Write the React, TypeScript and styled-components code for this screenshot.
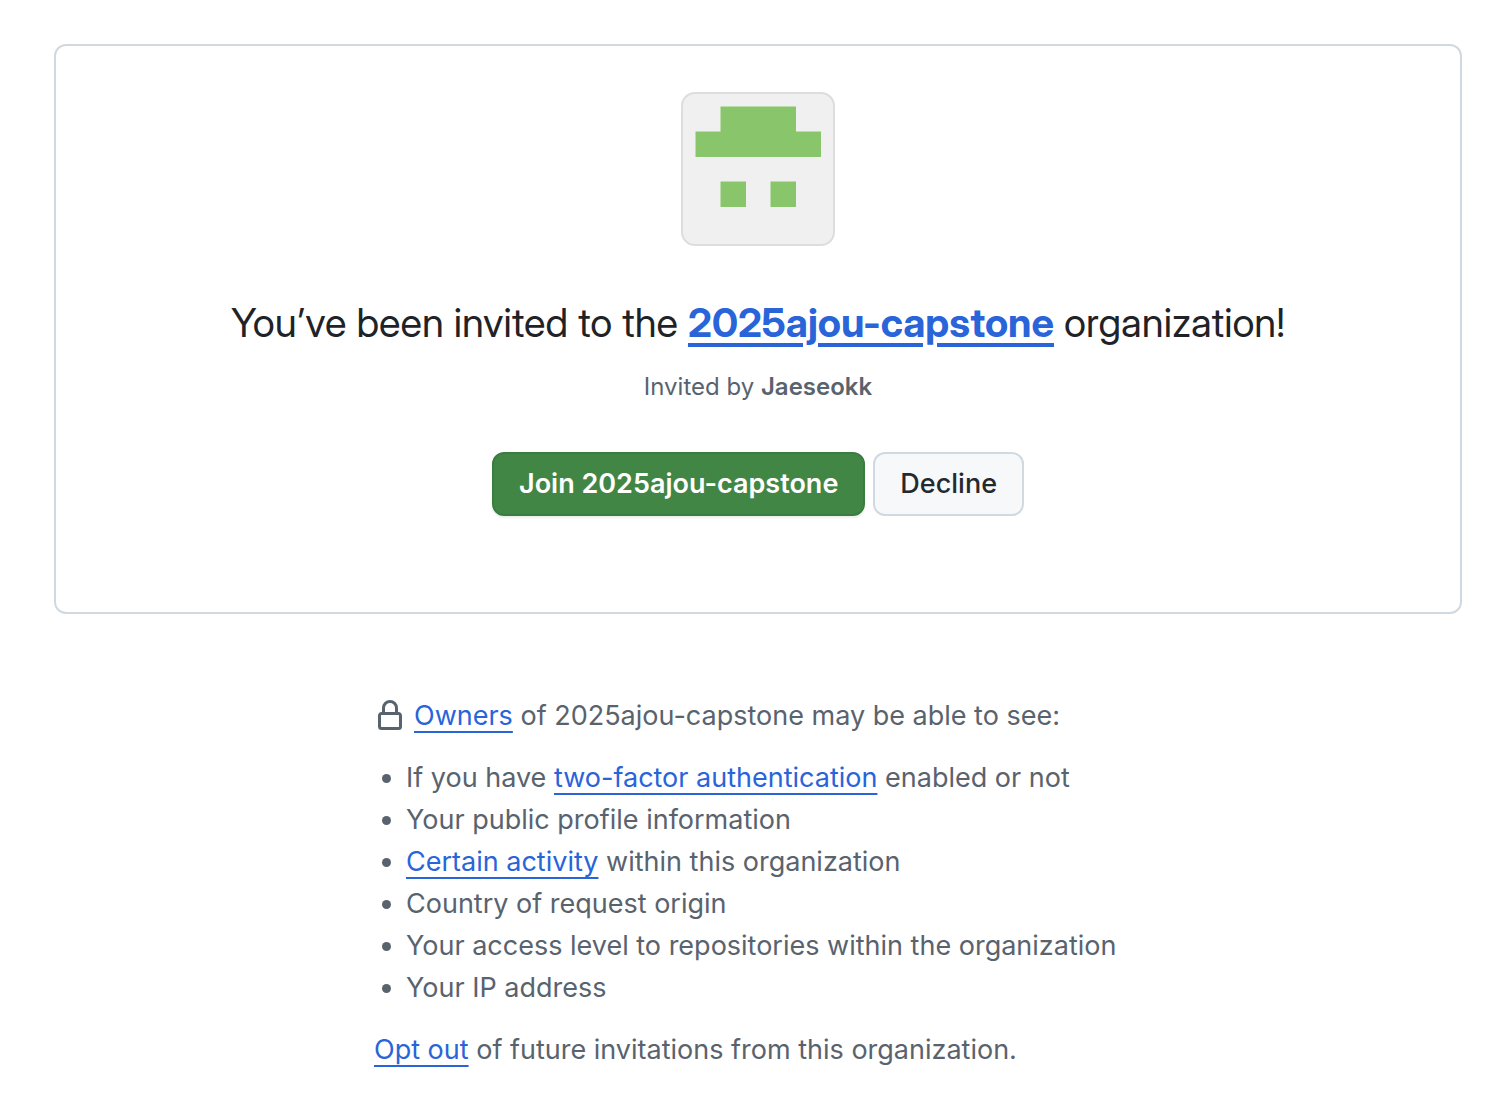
import React from 'react';
import styled, { createGlobalStyle } from 'styled-components';

const GlobalStyle = createGlobalStyle`
  *, *::before, *::after { box-sizing: border-box; }
  body {
    margin: 0;
    background: #ffffff;
    color: #1f2328;
    font-family: Inter, "Liberation Sans", sans-serif;
    font-size: 27px;
    line-height: 42px;
  }
`;

const Page = styled.main`
  padding: 44px 44px 42px 54px;
`;

const InviteCard = styled.section`
  display: flex;
  flex-direction: column;
  align-items: center;
  padding: 46px 32px 96px;
  border: 2px solid #d1d9e0;
  border-radius: 12px;
  text-align: center;
`;

const Avatar = styled.svg`
  display: block;
  width: 154px;
  height: 154px;
`;

const Title = styled.h1`
  margin: 47px 0 0;
  font-family: "Inter Display", Inter, "Liberation Sans", sans-serif;
  font-size: 40px;
  font-weight: 400;
  line-height: 60px;
`;

const TextLink = styled.a<{ $strong?: boolean }>`
  color: #2964d9;
  font-weight: ${({ $strong }) => ($strong ? 700 : 400)};
  text-decoration: underline;
  text-decoration-thickness: ${({ $strong }) => ($strong ? '4px' : '2px')};
  text-underline-offset: 6px;
`;

const InvitedBy = styled.p`
  margin: 16px 0 0;
  color: #59636e;
  font-size: 24px;
  line-height: 36px;

  b {
    font-weight: 600;
  }
`;

const Actions = styled.div`
  display: flex;
  gap: 8px;
  margin-top: 47px;
`;

const Button = styled.button<{ $primary?: boolean }>`
  height: 64px;
  padding: 0 25px;
  border: 2px solid ${({ $primary }) => ($primary ? '#3b7c40' : '#d1d9e0')};
  border-radius: 12px;
  background: ${({ $primary }) => ($primary ? '#428646' : '#f6f8fa')};
  box-shadow: ${({ $primary }) => ($primary ? '0 2px 2px rgba(31, 35, 40, 0.08)' : 'none')};
  color: ${({ $primary }) => ($primary ? '#ffffff' : '#25292e')};
  font: inherit;
  font-weight: ${({ $primary }) => ($primary ? 600 : 500)};
  cursor: pointer;
`;

const Privacy = styled.section`
  width: 100%;
  max-width: 768px;
  margin: 81px auto 0;
  color: #59636e;
`;

const PrivacyHeading = styled.p`
  display: flex;
  align-items: center;
  gap: 8px;
  margin: 0;
`;

const Lock = styled.svg`
  flex: none;
  width: 32px;
  height: 32px;
  fill: currentColor;
`;

const List = styled.ul`
  margin: 20px 0;
  padding-left: 32px;
`;

const App = () => (
  <>
    <GlobalStyle />
    <Page>
      <InviteCard>
        <Avatar viewBox="0 0 154 154" role="img" aria-label="@2025ajou-capstone">
          <rect x="1" y="1" width="152" height="152" rx="13" fill="#f0f0f0" stroke="#dcdddd" strokeWidth="2" />
          <path d="M39.5 14.5H115V39.5H140V65H14.5V39.5H39.5zM39.5 89.5H65V115H39.5zM89.5 89.5H115V115H89.5z" fill="#89c56b" />
        </Avatar>
        <Title>
          You’ve been invited to the <TextLink href="#organization" $strong>2025ajou-capstone</TextLink> organization!
        </Title>
        <InvitedBy>Invited by <b>Jaeseokk</b></InvitedBy>
        <Actions>
          <Button type="button" $primary>Join 2025ajou-capstone</Button>
          <Button type="button">Decline</Button>
        </Actions>
      </InviteCard>
      <Privacy>
        <PrivacyHeading>
          <Lock viewBox="0 0 16 16" aria-hidden="true">
            <path d="M4 4a4 4 0 0 1 8 0v2h.25c.966 0 1.75.784 1.75 1.75v5.5A1.75 1.75 0 0 1 12.25 15h-8.5A1.75 1.75 0 0 1 2 13.25v-5.5C2 6.784 2.784 6 3.75 6H4Zm8.25 3.5h-8.5a.25.25 0 0 0-.25.25v5.5c0 .138.112.25.25.25h8.5a.25.25 0 0 0 .25-.25v-5.5a.25.25 0 0 0-.25-.25ZM10.5 6V4a2.5 2.5 0 1 0-5 0v2Z" />
          </Lock>
          <span><TextLink href="#owners">Owners</TextLink> of 2025ajou-capstone may be able to see:</span>
        </PrivacyHeading>
        <List>
          <li>If you have <TextLink href="#two-factor">two-factor authentication</TextLink> enabled or not</li>
          <li>Your public profile information</li>
          <li><TextLink href="#activity">Certain activity</TextLink> within this organization</li>
          <li>Country of request origin</li>
          <li>Your access level to repositories within the organization</li>
          <li>Your IP address</li>
        </List>
        <div><TextLink href="#opt-out">Opt out</TextLink> of future invitations from this organization.</div>
      </Privacy>
    </Page>
  </>
);

export default App;
